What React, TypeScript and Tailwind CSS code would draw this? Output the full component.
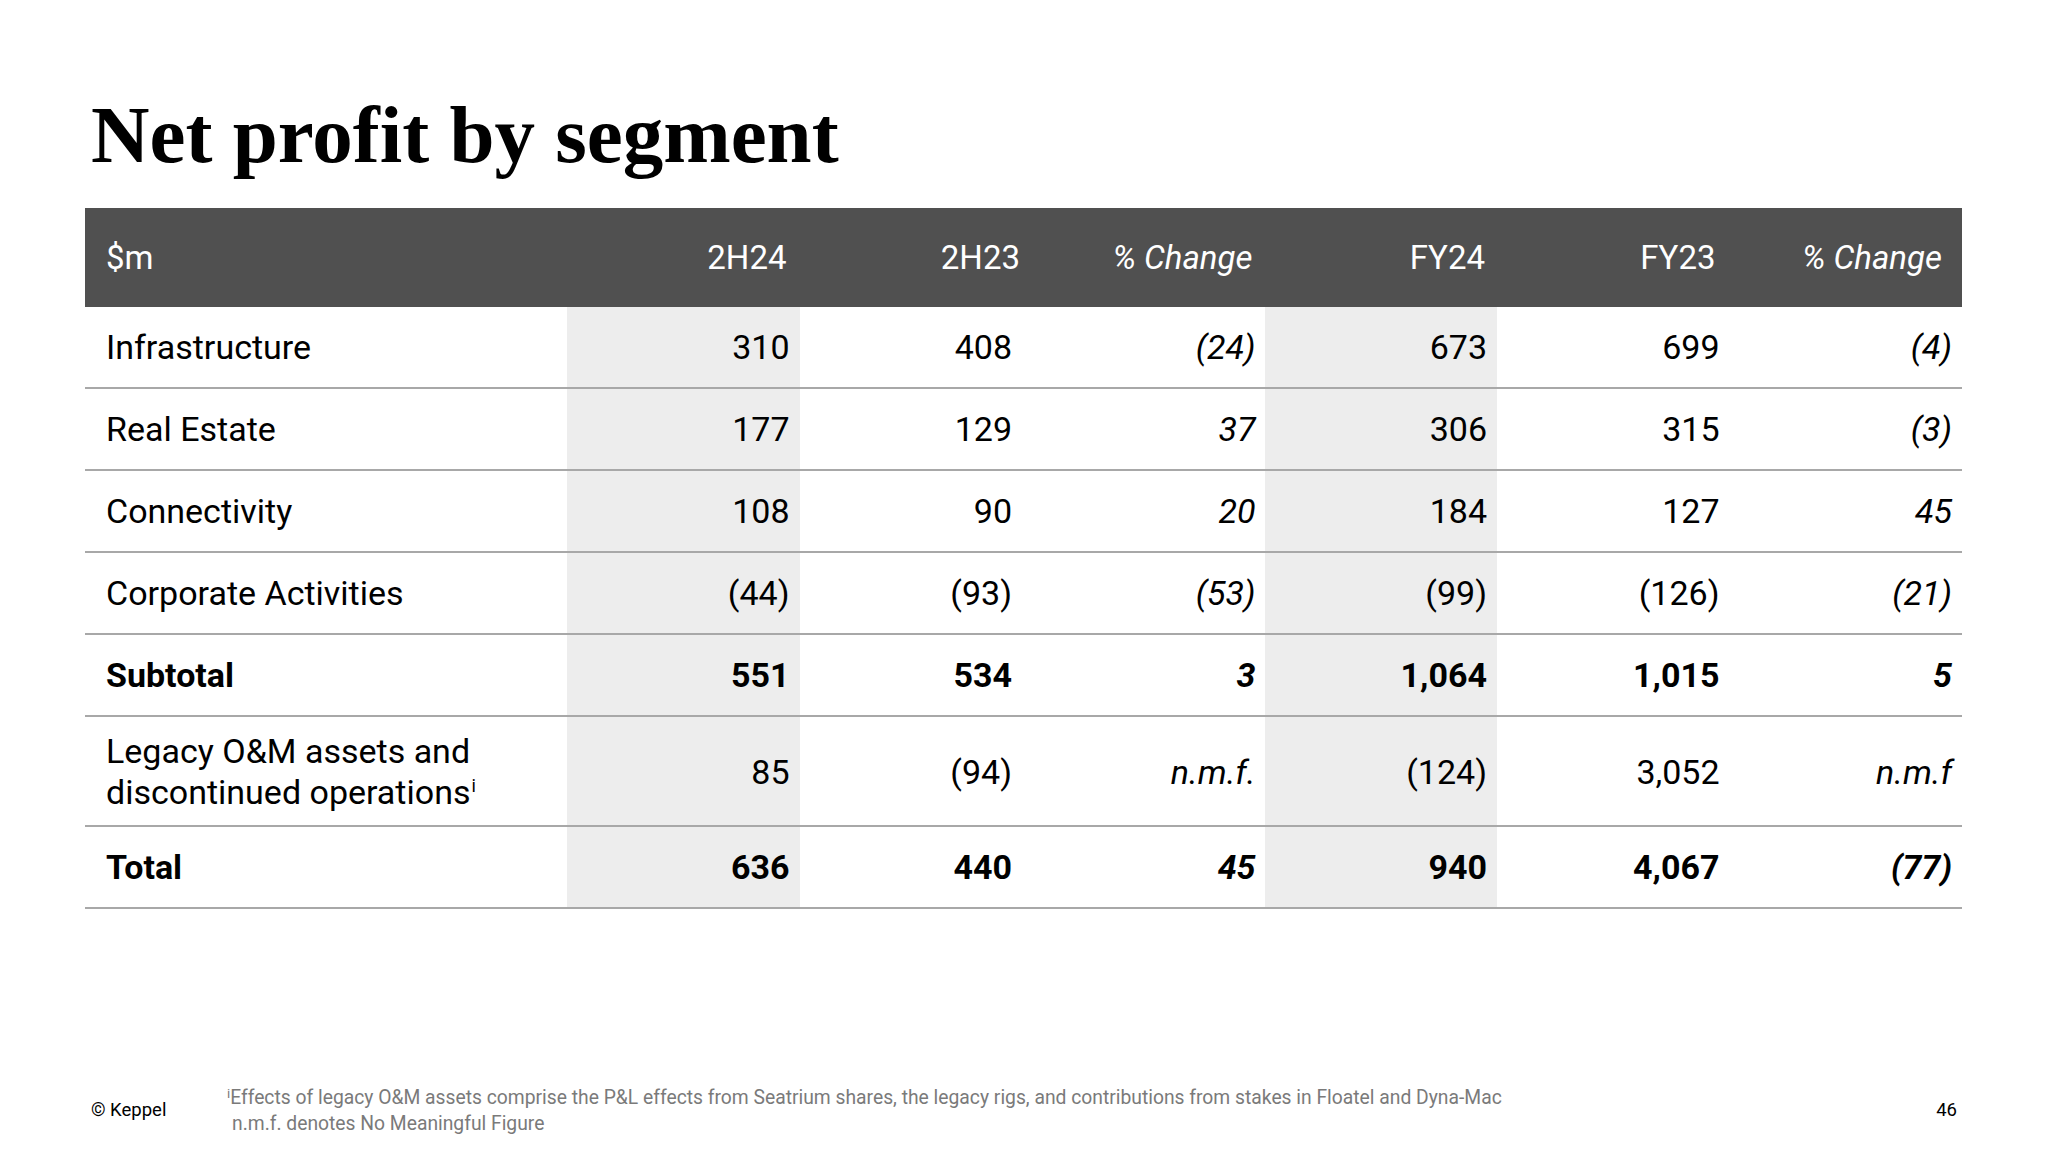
import React from 'react';

type Row = {
  label: React.ReactNode;
  values: string[];
  bold?: boolean;
  tall?: boolean;
};

const rows: Row[] = [
  { label: 'Infrastructure', values: ['310', '408', '(24)', '673', '699', '(4)'] },
  { label: 'Real Estate', values: ['177', '129', '37', '306', '315', '(3)'] },
  { label: 'Connectivity', values: ['108', '90', '20', '184', '127', '45'] },
  { label: 'Corporate Activities', values: ['(44)', '(93)', '(53)', '(99)', '(126)', '(21)'] },
  { label: 'Subtotal', values: ['551', '534', '3', '1,064', '1,015', '5'], bold: true },
  {
    label: (
      <>
        Legacy O&amp;M assets and
        <br />
        discontinued operations<span className="text-[18px] relative -top-[12px] ml-[1px]">i</span>
      </>
    ),
    values: ['85', '(94)', 'n.m.f.', '(124)', '3,052', 'n.m.f'],
    tall: true,
  },
  { label: 'Total', values: ['636', '440', '45', '940', '4,067', '(77)'], bold: true },
];

const headers = ['2H24', '2H23', '% Change', 'FY24', 'FY23', '% Change'];

// per-column right padding, taken from the slide
const headPad = ['pr-[13px]', 'pr-[12px]', 'pr-[12px]', 'pr-[12px]', 'pr-[14px]', 'pr-[20px]'];
const cellPad = ['pr-[10px]', 'pr-[20px]', 'pr-[9px]', 'pr-[10px]', 'pr-[10px]', 'pr-[10px]'];
const shaded = [true, false, false, true, false, false];
const italic = [false, false, true, false, false, true];

const App = () => {
  return (
    <div className="w-[2048px] h-[1152px] bg-white flex flex-col text-black font-['Roboto',sans-serif]">
      {/* Заголовок */}
      <h1 className="pt-[95px] pl-[91px] text-[81px] leading-none font-bold font-['Liberation_Serif',serif]">
        Net profit by segment
      </h1>

      {/* Таблица */}
      <div className="mt-[32px] ml-[85px] w-[1877px]">
        <div className="grid grid-cols-[482px_repeat(6,1fr)] h-[99px] bg-[#505050] text-white text-[33px]">
          <div className="flex items-center pl-[21px]">$m</div>
          {headers.map((h, i) => (
            <div
              key={i}
              className={`flex items-center justify-end ${headPad[i]} ${italic[i] ? 'italic' : ''}`}
            >
              {h}
            </div>
          ))}
        </div>

        {rows.map((row, r) => (
          <div
            key={r}
            className={`grid grid-cols-[482px_repeat(6,1fr)] border-b-2 border-[#a8a8a8] text-[34px] leading-[40px] ${
              row.tall ? 'h-[110px]' : 'h-[82px]'
            } ${row.bold ? 'font-bold' : ''}`}
          >
            <div className={`flex items-center pl-[21px] ${row.tall ? 'pt-[6px] leading-[41px]' : ''}`}>
              <div>{row.label}</div>
            </div>
            {row.values.map((v, i) => (
              <div
                key={i}
                className={`flex items-center justify-end ${cellPad[i]} ${shaded[i] ? 'bg-[#ededed]' : ''} ${
                  italic[i] ? 'italic' : ''
                } ${row.tall ? 'pt-[2px]' : ''}`}
              >
                {v}
              </div>
            ))}
          </div>
        ))}
      </div>

      {/* Подвал */}
      <div className="mt-auto pb-[16px] pl-[91px] pr-[91px] flex items-center">
        <div className="w-[136px] text-[18.5px]">© Keppel</div>
        <div className="flex-1 text-[19.3px] leading-[24px] text-[#7a7a7a]">
          <div>
            <span className="text-[13px] relative -top-[6px]">i</span>Effects of legacy O&amp;M assets comprise the
            P&amp;L effects from Seatrium shares, the legacy rigs, and contributions from stakes in Floatel and
            Dyna-Mac
          </div>
          <div className="pl-[5px]">n.m.f. denotes No Meaningful Figure</div>
        </div>
        <div className="text-[18.5px]">46</div>
      </div>
    </div>
  );
};

export default App;
